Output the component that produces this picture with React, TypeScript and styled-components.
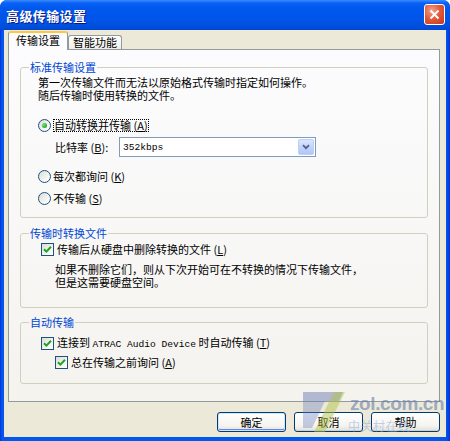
import styled, { createGlobalStyle } from 'styled-components';

const GlobalStyle = createGlobalStyle`
  html, body {
    margin: 0;
    padding: 0;
    background: #ffffff;
    overflow: hidden;
  }
  body {
    font-family: "Noto Sans CJK SC", "Noto Sans", sans-serif;
    font-size: 11px;
    color: #000;
  }
`;

const Window = styled.div`
  position: relative;
  width: 450px;
  height: 441px;
  display: flex;
  flex-direction: column;
  background: linear-gradient(to right, #0831d9 0, #0058ee 2px, #0058ee 446px, #0831d9 450px);
  border-radius: 7px 7px 0 0;
  overflow: hidden;
`;

const TitleBar = styled.div`
  height: 30px;
  flex: none;
  display: flex;
  align-items: center;
  justify-content: space-between;
  padding: 0 5px 0 6px;
  background: linear-gradient(
    #3a8cff 0,
    #0a62f5 3px,
    #0058ee 8px,
    #0055e8 60%,
    #0050e0 85%,
    #0046d0 100%
  );
`;

const Title = styled.span`
  color: #fff;
  font-size: 13px;
  font-weight: 700;
  letter-spacing: 0.4px;
  text-shadow: 1px 1px 0 #0a1883;
`;

const CloseButton = styled.div`
  width: 19px;
  height: 19px;
  border: 1px solid #fff;
  border-radius: 3px;
  background: radial-gradient(circle at 35% 30%, #f2a48a 0, #e35b3a 45%, #c7361a 100%);
  display: flex;
  align-items: center;
  justify-content: center;
  margin-top: -1px;
`;

const Body = styled.div`
  flex: 1;
  margin: 0 4px 4px 4px;
  padding: 2px 6px 0 4px;
  background: #ece9d8;
  display: flex;
  flex-direction: column;
`;

const TabRow = styled.div`
  height: 18px;
  display: flex;
  align-items: flex-end;
  margin-bottom: -1px;
  position: relative;
  z-index: 1;
`;

const Tab = styled.div<{ $active?: boolean }>`
  box-sizing: border-box;
  height: ${(p) => (p.$active ? '19px' : '14px')};
  padding: 0 ${(p) => (p.$active ? '7px' : '4px')};
  margin-bottom: ${(p) => (p.$active ? '0' : '1px')};
  border: 1px solid #919b9c;
  border-bottom: none;
  border-top: ${(p) => (p.$active ? '2px solid #ffc83c' : '1px solid #919b9c')};
  border-radius: 3px 3px 0 0;
  background: ${(p) =>
    p.$active ? '#fcfcfe' : 'linear-gradient(#ffffff, #f3f3ef 70%, #ecebe6)'};
  display: flex;
  align-items: center;
  line-height: 13px;
  font-size: 11px;
  padding-bottom: ${(p) => (p.$active ? '2px' : '0')};
`;

const Panel = styled.div`
  box-sizing: border-box;
  height: 353px;
  border: 1px solid #919b9c;
  background: linear-gradient(#fcfcfe, #f4f3ee);
  padding: 11px 11px 0 11px;
  display: flex;
  flex-direction: column;
`;

const Group = styled.fieldset<{ $top?: number; $bottom: number }>`
  margin: ${(p) => p.$top ?? 0}px 0 0 0;
  padding: 0 0 ${(p) => p.$bottom}px 0;
  border: 1px solid #d0d0bf;
  border-radius: 3px;
  min-width: 0;
`;

const Legend = styled.legend`
  margin-left: 8px;
  padding: 0 1px;
  color: #0046d5;
  font-size: 11px;
  line-height: 13px;
`;

const GroupContent = styled.div<{ $indent: number }>`
  padding-left: ${(p) => p.$indent}px;
  display: flex;
  flex-direction: column;
`;

const TextBlock = styled.div<{ $top: number; $indent?: number }>`
  margin-top: ${(p) => p.$top}px;
  margin-left: ${(p) => p.$indent ?? 0}px;
  display: flex;
  flex-direction: column;
`;

const TextLine = styled.div`
  height: 13px;
  line-height: 13px;
  font-size: 11px;
  white-space: nowrap;
`;

const OptionRow = styled.div<{ $top: number; $indent?: number }>`
  margin-top: ${(p) => p.$top}px;
  margin-left: ${(p) => p.$indent ?? 0}px;
  height: 14px;
  display: flex;
  align-items: center;
  line-height: 13px;
`;

const RadioCircle = styled.span<{ $checked?: boolean }>`
  box-sizing: border-box;
  width: 13px;
  height: 13px;
  flex: none;
  border: 1px solid #1c5180;
  border-radius: 50%;
  background: linear-gradient(135deg, #dcdcd7 0%, #f4f4f0 60%, #ffffff 100%);
  display: flex;
  align-items: center;
  justify-content: center;
  margin-right: 2px;

  &::after {
    content: '';
    display: ${(p) => (p.$checked ? 'block' : 'none')};
    width: 5px;
    height: 5px;
    border-radius: 50%;
    background: radial-gradient(circle at 35% 35%, #7ce07a 0, #2fb22f 60%, #1f8f1f 100%);
  }
`;

const CheckBox = styled.span`
  box-sizing: border-box;
  width: 13px;
  height: 13px;
  flex: none;
  border: 1px solid #1c5180;
  background: linear-gradient(135deg, #dcdcd7 0%, #f4f4f0 60%, #ffffff 100%);
  display: flex;
  align-items: center;
  justify-content: center;
  margin-right: 3px;
`;

const FocusLabel = styled.span`
  outline: 1px dotted #000;
  outline-offset: -1px;
  padding: 0 1px;
  line-height: 13px;
`;

const Key = styled.u`
  text-underline-offset: 1px;
`;

const Latin = styled.span`
  font-family: "Liberation Mono", "DejaVu Sans Mono", monospace;
  font-size: 9.6px;
`;

const FieldRow = styled.div`
  margin-top: 5px;
  margin-left: 17px;
  display: flex;
  align-items: center;
  height: 20px;
`;

const FieldLabel = styled.span`
  width: 64px;
  flex: none;
`;

const Combo = styled.div`
  box-sizing: border-box;
  width: 197px;
  height: 20px;
  border: 1px solid #7f9db9;
  background: #fff;
  display: flex;
  align-items: center;
  justify-content: space-between;
  padding-left: 3px;
`;

const ComboButton = styled.div`
  box-sizing: border-box;
  width: 16px;
  height: 16px;
  margin-right: 1px;
  border: 1px solid #b9d1fa;
  border-radius: 2px;
  background: linear-gradient(#dbe5fd, #c3d3fb 50%, #b3c6f7);
  display: flex;
  align-items: center;
  justify-content: center;
`;

const ButtonRow = styled.div`
  margin-top: 10px;
  display: flex;
  justify-content: flex-end;
  gap: 8px;
`;

const Button = styled.div<{ $default?: boolean }>`
  box-sizing: border-box;
  width: 69px;
  height: 20px;
  border: 1px solid #003c74;
  border-radius: 3px;
  background: linear-gradient(#ffffff, #f5f4ef 70%, #e3e0d5);
  box-shadow: ${(p) =>
    p.$default ? 'inset 0 0 0 1px #cee7ff, inset 0 -1px 0 1px #6982ee' : 'inset 0 -1px 0 #d6d0c5'};
  display: flex;
  align-items: center;
  justify-content: center;
  font-size: 11px;
  line-height: 13px;
`;

const Watermark = styled.div`
  position: absolute;
  left: 303px;
  top: 391px;
  width: 146px;
  height: 44px;
  pointer-events: none;
`;

const WatermarkLogo = styled.svg`
  position: absolute;
  left: 0;
  top: 1px;
`;

const WatermarkSite = styled.span`
  position: absolute;
  left: 47px;
  top: 3px;
  font-family: "Liberation Sans", Arial, sans-serif;
  font-weight: 700;
  font-size: 19px;
  line-height: 19px;
  letter-spacing: -0.4px;
  color: rgba(105, 125, 175, 0.62);
`;

const WatermarkName = styled.span`
  position: absolute;
  left: 45px;
  top: 28px;
  font-size: 12px;
  line-height: 14px;
  letter-spacing: 0.5px;
  color: rgba(140, 165, 220, 0.5);
`;

const Check = () => (
  <svg width="9" height="9" viewBox="0 0 9 9">
    <path d="M1 4.2 L3.4 6.6 L8 1.8" fill="none" stroke="#21a121" strokeWidth="2" />
  </svg>
);

const App = () => {
  return (
    <>
      <GlobalStyle />
      <Window>
        <TitleBar>
          <Title>高级传输设置</Title>
          <CloseButton>
            <svg width="11" height="11" viewBox="0 0 11 11">
              <path d="M1.5 1.5 L9.5 9.5 M9.5 1.5 L1.5 9.5" stroke="#fff" strokeWidth="2" />
            </svg>
          </CloseButton>
        </TitleBar>

        <Body>
          <TabRow>
            <Tab $active>传输设置</Tab>
            <Tab>智能功能</Tab>
          </TabRow>

          <Panel>
            <Group $bottom={12}>
              <Legend>标准传输设置</Legend>
              <GroupContent $indent={17}>
                <TextBlock $top={2}>
                  <TextLine>第一次传输文件而无法以原始格式传输时指定如何操作。</TextLine>
                  <TextLine>随后传输时使用转换的文件。</TextLine>
                </TextBlock>
                <OptionRow $top={16}>
                  <RadioCircle $checked />
                  <FocusLabel>
                    自动转换并传输 (<Key>A</Key>)
                  </FocusLabel>
                </OptionRow>
                <FieldRow>
                  <FieldLabel>
                    比特率 (<Key>B</Key>):
                  </FieldLabel>
                  <Combo>
                    <Latin>352kbps</Latin>
                    <ComboButton>
                      <svg width="8" height="6" viewBox="0 0 8 6">
                        <path d="M1 1.2 L4 4.2 L7 1.2" fill="none" stroke="#4d6185" strokeWidth="1.8" />
                      </svg>
                    </ComboButton>
                  </Combo>
                </FieldRow>
                <OptionRow $top={12}>
                  <RadioCircle />
                  <span>
                    每次都询问 (<Key>K</Key>)
                  </span>
                </OptionRow>
                <OptionRow $top={8}>
                  <RadioCircle />
                  <span>
                    不传输 (<Key>S</Key>)
                  </span>
                </OptionRow>
              </GroupContent>
            </Group>

            <Group $top={9} $bottom={18}>
              <Legend>传输时转换文件</Legend>
              <GroupContent $indent={20}>
                <OptionRow $top={2}>
                  <CheckBox>
                    <Check />
                  </CheckBox>
                  <span>
                    传输后从硬盘中删除转换的文件 (<Key>L</Key>)
                  </span>
                </OptionRow>
                <TextBlock $top={7} $indent={14}>
                  <TextLine>如果不删除它们，则从下次开始可在不转换的情况下传输文件，</TextLine>
                  <TextLine>但是这需要硬盘空间。</TextLine>
                </TextBlock>
              </GroupContent>
            </Group>

            <Group $top={8} $bottom={14}>
              <Legend>自动传输</Legend>
              <GroupContent $indent={20}>
                <OptionRow $top={7}>
                  <CheckBox>
                    <Check />
                  </CheckBox>
                  <span>
                    连接到 <Latin>ATRAC Audio Device</Latin> 时自动传输 (<Key>T</Key>)
                  </span>
                </OptionRow>
                <OptionRow $top={5} $indent={14}>
                  <CheckBox>
                    <Check />
                  </CheckBox>
                  <span>
                    总在传输之前询问 (<Key>A</Key>)
                  </span>
                </OptionRow>
              </GroupContent>
            </Group>
          </Panel>

          <ButtonRow>
            <Button $default>确定</Button>
            <Button>取消</Button>
            <Button>帮助</Button>
          </ButtonRow>
        </Body>

        <Watermark>
          <WatermarkLogo width="42" height="40" viewBox="0 0 42 40">
            <polygon points="0,0 40,0 36,9 0,9" fill="rgba(100,112,175,0.45)" />
            <polygon points="0,9 22,9 9,36 0,36" fill="rgba(95,118,190,0.35)" />
            <polygon points="31,0 42,0 22,40 11,40" fill="rgba(175,195,70,0.48)" />
          </WatermarkLogo>
          <WatermarkSite>zol.com.cn</WatermarkSite>
          <WatermarkName>中关村在线</WatermarkName>
        </Watermark>
      </Window>
    </>
  );
};

export default App;
